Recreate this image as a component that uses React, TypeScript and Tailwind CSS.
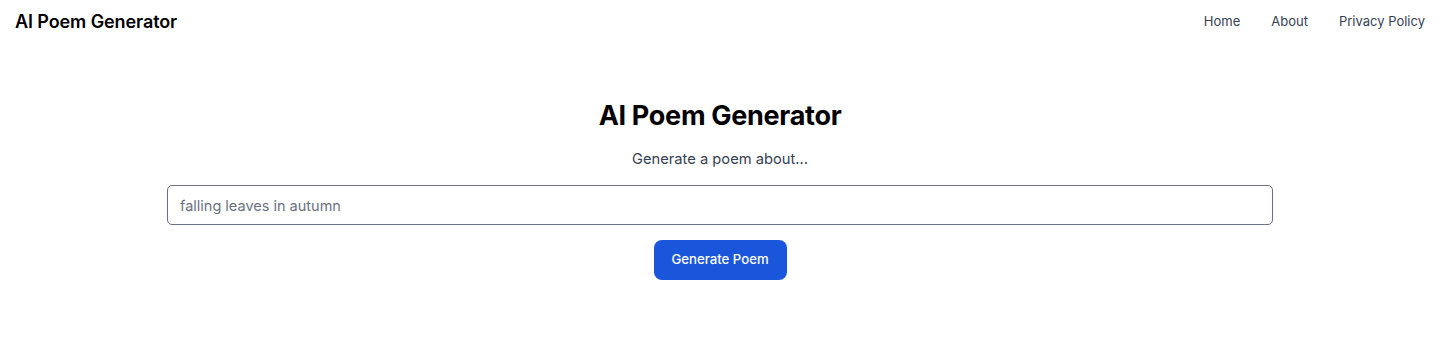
import React, { useState } from 'react';

const App: React.FC = () => {
  const [topic, setTopic] = useState('');

  return (
    <div className="min-h-screen bg-white font-['Inter',sans-serif] text-black">
      <header className="flex items-center justify-between px-[15px] h-[43px]">
        <span className="text-[18px] font-semibold tracking-[-0.1px]">AI Poem Generator</span>
        <nav className="flex items-center gap-[31px] text-[13px] text-gray-700">
          <a href="#">Home</a>
          <a href="#">About</a>
          <a href="#">Privacy Policy</a>
        </nav>
      </header>

      <main className="mx-auto max-w-[1106px] pt-[55px] flex flex-col items-center">
        <h1 className="text-[27px] font-bold tracking-[-0.3px] leading-9">AI Poem Generator</h1>
        <p className="mt-[14px] text-[14.7px] text-gray-700">Generate a poem about...</p>
        <input
          value={topic}
          onChange={e => setTopic(e.target.value)}
          placeholder="falling leaves in autumn"
          className="mt-[15px] w-full h-[40px] rounded-[5px] border border-gray-500 px-3 text-[14.5px] placeholder:text-gray-500 outline-none"
        />
        <button className="mt-[15px] h-[40px] w-[133px] rounded-lg bg-[#1a56db] text-[13.2px] font-medium text-white">
          Generate Poem
        </button>
      </main>
    </div>
  );
};

export default App;
